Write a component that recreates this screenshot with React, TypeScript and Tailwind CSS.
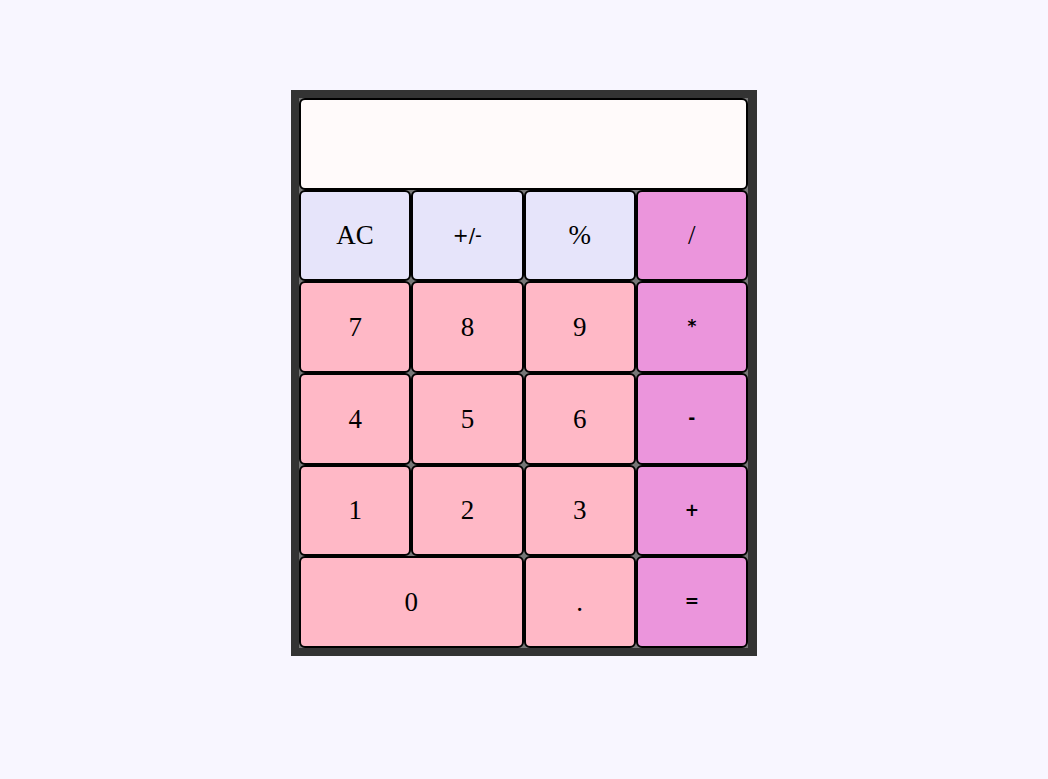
import React from 'react';

type Key = { label: string; kind: 'fn' | 'num' | 'op'; size?: 'md' | 'sm'; wide?: boolean };

const keys: Key[] = [
  { label: 'AC', kind: 'fn' },
  { label: '+/-', kind: 'fn', size: 'md' },
  { label: '%', kind: 'fn' },
  { label: '/', kind: 'op' },
  { label: '7', kind: 'num' },
  { label: '8', kind: 'num' },
  { label: '9', kind: 'num' },
  { label: '*', kind: 'op', size: 'sm' },
  { label: '4', kind: 'num' },
  { label: '5', kind: 'num' },
  { label: '6', kind: 'num' },
  { label: '-', kind: 'op', size: 'sm' },
  { label: '1', kind: 'num' },
  { label: '2', kind: 'num' },
  { label: '3', kind: 'num' },
  { label: '+', kind: 'op', size: 'sm' },
  { label: '0', kind: 'num', wide: true },
  { label: '.', kind: 'num' },
  { label: '=', kind: 'op', size: 'sm' },
];

const bgFor = {
  fn: 'bg-[#e6e4fa]',
  num: 'bg-[#ffb8c6]',
  op: 'bg-[#eb95dc]',
};

const textFor = (k: Key) => {
  if (k.size === 'md') return 'text-[19px] font-["DejaVu_Sans",sans-serif]';
  if (k.size === 'sm') return 'text-[17px] font-["DejaVu_Sans",sans-serif] font-bold';
  return 'text-[27px] font-["Liberation_Serif",serif]';
};

const App = (): JSX.Element => {
  return (
    <div className="min-h-screen w-full bg-[#f8f6ff] flex justify-center pt-[90px]">
      <div className="w-[466px] h-[566px] bg-[#333333] p-2 pr-[9px]">
        <div className="grid grid-cols-4 grid-rows-6 h-full bg-[#767676]">
          <div className="col-span-4 bg-[#fffafa] border-2 border-black rounded-md"></div>
          {keys.map(k => (
            <button
              key={k.label}
              className={`${bgFor[k.kind]} ${k.wide ? 'col-span-2' : ''} border-2 border-black rounded-md flex items-center justify-center text-black ${textFor(k)}`}
            >
              {k.label}
            </button>
          ))}
        </div>
      </div>
    </div>
  );
};

export default App;
